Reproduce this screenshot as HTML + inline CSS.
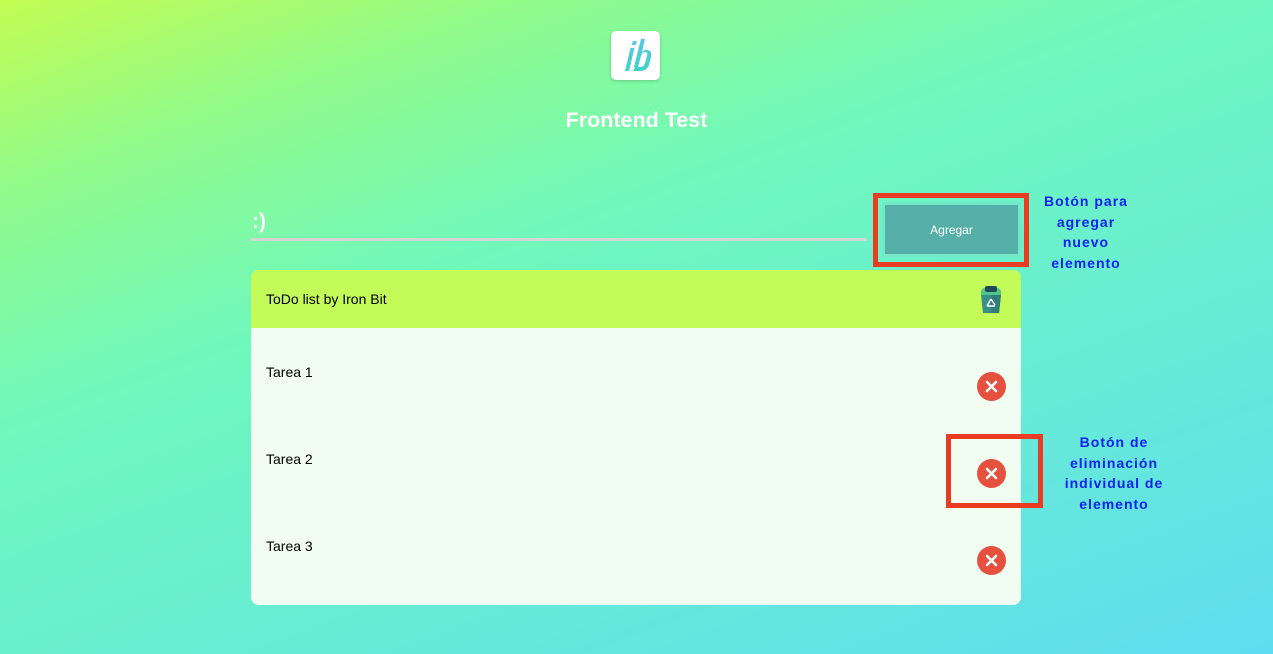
<!DOCTYPE html>
<html><head><meta charset="utf-8"><style>
*{margin:0;padding:0;box-sizing:border-box}
body{width:1273px;height:654px;overflow:hidden;font-family:"Liberation Sans",sans-serif;position:relative;
background:linear-gradient(160deg,#c2fc52 0%,#8ffb8c 18%,#70f8bc 38%,#68ecd3 65%,#60dcf0 100%)}
.abs{position:absolute}
.logo{left:611px;top:31px;width:49px;height:49px;background:#fff;border-radius:5px;box-shadow:0 1px 3px rgba(0,0,0,.2)}
h1{position:absolute;left:0;width:1273px;top:108px;text-align:center;color:#fff;font-size:21.5px;font-weight:bold}
.smile{left:252px;top:210px;color:#fff;font-size:21px;font-weight:bold}
.line{left:251px;top:238px;width:616px;height:3px;background:#d3d6d3}
.rb{border:5px solid #ea3c22}
.btn{left:882px;top:202px;width:139px;height:55px;background:#55aea7;border:3px solid #74e8c6;color:#fff;font-size:12px;display:flex;align-items:center;justify-content:center}
.note{color:#0a21f0;font-weight:bold;font-size:14px;text-align:center;line-height:20.5px;letter-spacing:1px}
.card{left:251px;top:270px;width:770px;height:335px;background:#f1fdf1;border-radius:8px;overflow:hidden}
.hd{height:58px;background:#c3fb58;padding:21px 15px;font-size:14px}
.item{position:absolute;left:15px;font-size:14px}
.x{position:absolute;left:726px;width:29px;height:29px;border-radius:50%;background:#e5503f}
</style></head><body>
<div class="abs logo"><svg width="49" height="49" viewBox="0 0 49 49">
<defs><linearGradient id="g" x1="0" y1="0" x2="0" y2="1"><stop offset="0" stop-color="#5ac6e6"/><stop offset="1" stop-color="#3ed4c6"/></linearGradient></defs>
<path d="M22 10 l4 0 -1.5 4 -4 0z M19.5 17 l4 0 -5.5 23 -4 0z" fill="url(#g)"/>
<path d="M30 8 l4 0 -3 13 q3-3 6-2 q4 1 3 7 l-2 8 q-2 6 -9 6 l-7 0 2-4 5 0 q4 0 5-4 l2-7 q1-4-2-4 q-3 0-4 4 l-3 11 -4 0z" fill="url(#g)"/>
</svg></div>
<h1>Frontend Test</h1>
<div class="abs smile">:)</div>
<div class="abs line"></div>
<div class="abs rb" style="left:873px;top:193px;width:156px;height:74px"></div>
<div class="abs btn">Agregar</div>
<div class="abs note" style="left:1026px;top:191px;width:120px">Botón para<br>agregar<br>nuevo<br>elemento</div>
<div class="abs card">
<div class="hd">ToDo list by Iron Bit</div>
<svg style="position:absolute;left:727px;top:15px" width="26" height="30" viewBox="0 0 26 30">
<path d="M3 7 q0-5 10-5 q10 0 10 5 v3 h-20z" fill="#53c58a"/>
<rect x="7" y="1" width="12" height="6" rx="2" fill="#1f4a5a"/>
<path d="M3 10 h20 l-2 18 h-16z" fill="#3a8e88"/>
<path d="M13 10 h10 l-2 18 h-8z" fill="#2f7c78"/>
<path d="M13 14 l4 6 M17 21 h-8 M9 21 l4-7" stroke="#fff" stroke-width="1.4" fill="none"/>
</svg>
<div class="item" style="top:94px">Tarea 1</div>
<div class="item" style="top:181px">Tarea 2</div>
<div class="item" style="top:268px">Tarea 3</div>
<div class="x" style="top:102px"><svg width="29" height="29"><path d="M10 10l9 9M19 10l-9 9" stroke="#fff" stroke-width="2.6" stroke-linecap="round"/></svg></div>
<div class="x" style="top:189px"><svg width="29" height="29"><path d="M10 10l9 9M19 10l-9 9" stroke="#fff" stroke-width="2.6" stroke-linecap="round"/></svg></div>
<div class="x" style="top:276px"><svg width="29" height="29"><path d="M10 10l9 9M19 10l-9 9" stroke="#fff" stroke-width="2.6" stroke-linecap="round"/></svg></div>
</div>
<div class="abs rb" style="left:946px;top:434px;width:97px;height:74px"></div>
<div class="abs note" style="left:1050px;top:432px;width:128px">Botón de<br>eliminación<br>individual de<br>elemento</div>
</body></html>
